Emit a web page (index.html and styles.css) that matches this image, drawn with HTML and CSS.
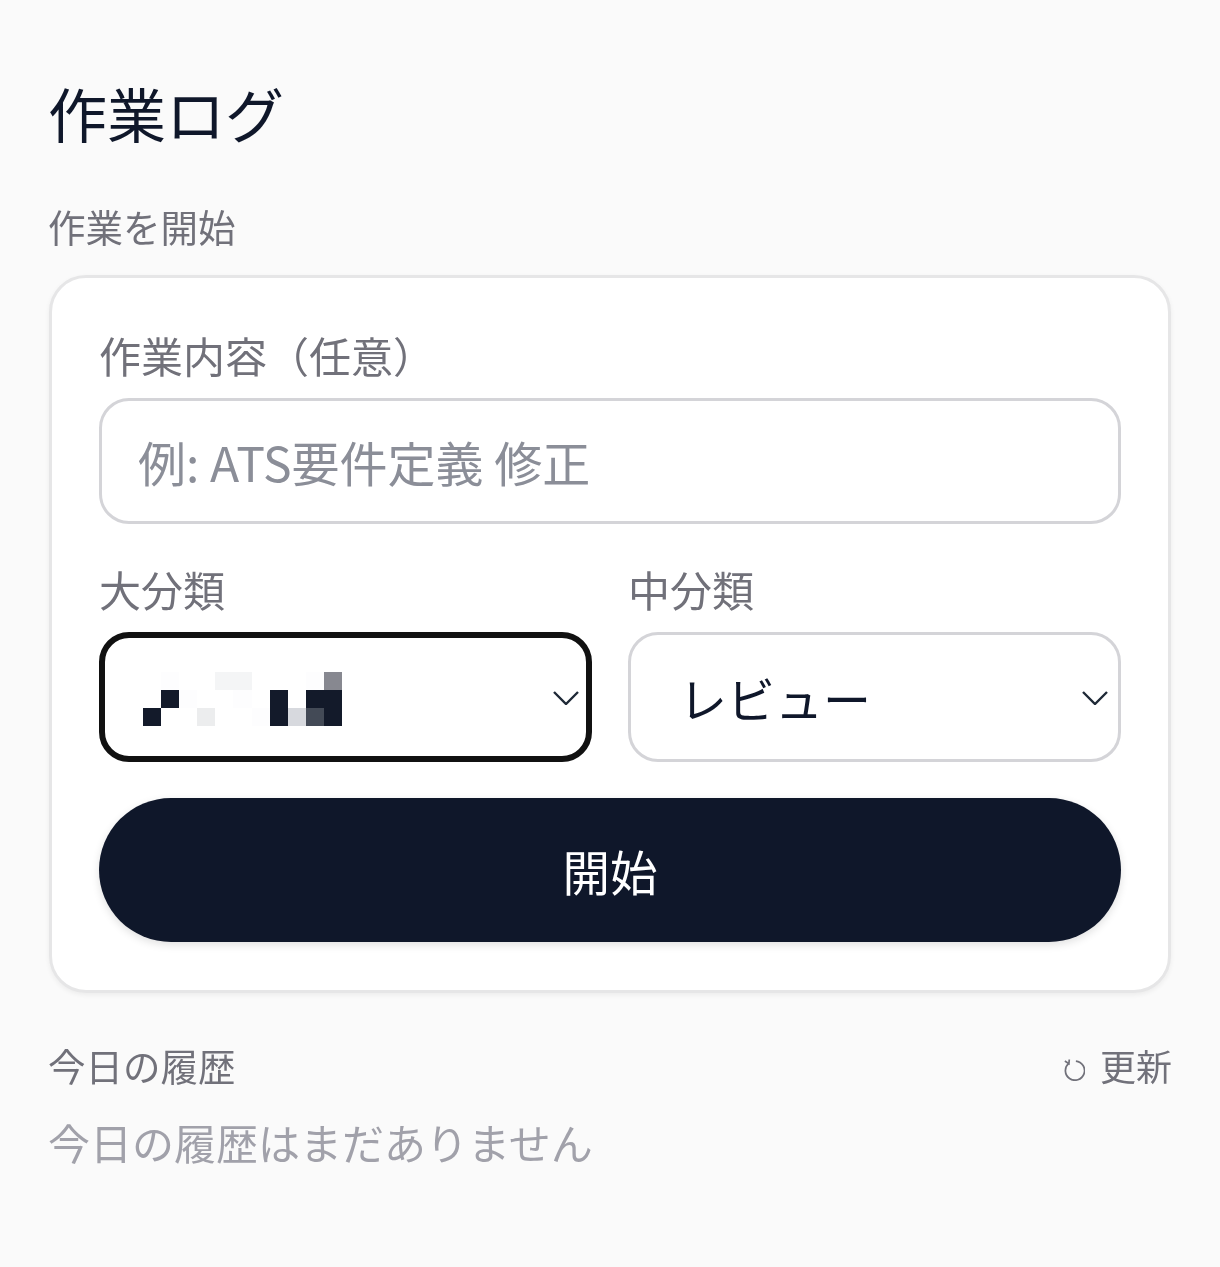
FILE: index.html
```html
<!DOCTYPE html>
<html lang="ja">
<head>
  <meta charset="UTF-8">
  <meta name="viewport" content="width=device-width, initial-scale=1.0">
  <title>作業ログ</title>
  <link rel="stylesheet" href="styles.css">
</head>
<body>
  <main class="page">
    <h1 class="title">作業ログ</h1>
    <h2 class="section-label">作業を開始</h2>

    <form class="card">
      <label class="field-label" for="task">作業内容（任意）</label>
      <input class="text-input" type="text" id="task" placeholder="例: ATS要件定義 修正">

      <div class="select-row">
        <div class="select-col">
          <div class="field-label">大分類</div>
          <div class="select select-focus">
            <div class="mosaic">
              <i></i><i class="c-faint"></i><i></i><i></i><i class="c-pale"></i><i class="c-pale"></i><i></i><i></i><i></i><i class="c-faint"></i><i class="c-mid"></i>
              <i></i><i class="c-dark"></i><i class="c-faint"></i><i></i><i></i><i class="c-faint"></i><i></i><i class="c-dark"></i><i></i><i class="c-dark"></i><i class="c-dark"></i>
              <i class="c-dark"></i><i></i><i></i><i class="c-light"></i><i></i><i></i><i class="c-faint"></i><i class="c-dark"></i><i class="c-grey"></i><i class="c-slate"></i><i class="c-dark"></i>
            </div>
            <svg class="chevron" viewBox="0 0 26 14"><path d="M1 1l12 12L25 1"/></svg>
          </div>
        </div>
        <div class="select-col">
          <div class="field-label">中分類</div>
          <div class="select">
            <span class="select-value">レビュー</span>
            <svg class="chevron" viewBox="0 0 26 14"><path d="M1 1l12 12L25 1"/></svg>
          </div>
        </div>
      </div>

      <button class="start-btn" type="button">開始</button>
    </form>

    <div class="history-head">
      <h2 class="section-label">今日の履歴</h2>
      <button class="refresh" type="button">
        <svg class="refresh-icon" viewBox="0 0 24 24"><path d="M7 5.6A10 10 0 1 0 14.5 3.2"/><path d="M3 3.2L7.2 6l.4-4.4"/></svg>
        更新
      </button>
    </div>
    <p class="empty">今日の履歴はまだありません</p>
  </main>
</body>
</html>
```
FILE: styles.css
```css
* {
  margin: 0;
  padding: 0;
  box-sizing: border-box;
}

body {
  background: #fafafa;
  color: #0f172a;
  font-family: "Noto Sans CJK JP", "Noto Sans", sans-serif;
}

.page {
  padding: 75px 48px 0;
  will-change: opacity;
}

.title {
  font-size: 59px;
  font-weight: 400;
  line-height: 76px;
}

.section-label {
  font-size: 37.5px;
  font-weight: 400;
  line-height: 50px;
  color: #71717a;
}

.page > .section-label {
  margin-top: 50px;
}

.card {
  margin: 24px 1px 0;
  height: 718px;
  padding: 47px 47px;
  background: #fff;
  border: 3px solid #e6e6e7;
  border-radius: 37px;
  box-shadow: 0 2px 5px rgba(0, 0, 0, 0.06);
}

.field-label {
  display: block;
  font-size: 42px;
  line-height: 60px;
  color: #71717a;
}

.text-input {
  display: block;
  width: 100%;
  height: 126px;
  margin-top: 13px;
  padding: 0 36px;
  font-family: inherit;
  font-size: 48px;
  color: #0f172a;
  background: #fff;
  border: 3.5px solid #d4d4d8;
  border-radius: 30px;
  outline: none;
}

.text-input::placeholder {
  color: #8b8e98;
  opacity: 1;
}

.select-row {
  display: grid;
  grid-template-columns: 1fr 1fr;
  gap: 36px;
  margin-top: 35px;
}

.select {
  display: flex;
  align-items: center;
  justify-content: space-between;
  height: 130px;
  margin-top: 13px;
  padding: 0 10px 0 48px;
  background: #fff;
  border: 3.5px solid #d4d4d8;
  border-radius: 30px;
}

.select-focus {
  padding: 0 7px 0 38px;
  border: 6px solid #111;
}

.select-value {
  font-size: 48px;
  line-height: 60px;
}

.chevron {
  width: 26px;
  height: 14px;
  margin-top: 2px;
  fill: none;
  stroke: #1f2937;
  stroke-width: 2.4;
}

.mosaic {
  display: grid;
  grid-template-columns: repeat(11, 18.1px);
  grid-auto-rows: 17.7px;
  margin-top: 4px;
}

.c-faint { background: #fdfdfe; }
.c-pale { background: #f4f5f6; }
.c-light { background: #ecedee; }
.c-grey { background: #d7d9de; }
.c-mid { background: #878890; }
.c-slate { background: #434a56; }
.c-dark { background: #131a2a; }

.start-btn {
  display: block;
  width: 100%;
  height: 144px;
  margin-top: 36px;
  font-family: inherit;
  font-size: 47.5px;
  color: #fff;
  background: #0f172a;
  border: none;
  border-radius: 72px;
  box-shadow: 0 3px 8px rgba(0, 0, 0, 0.12);
}

.history-head {
  display: flex;
  align-items: center;
  justify-content: space-between;
  margin-top: 47px;
}

.refresh {
  display: flex;
  align-items: center;
  gap: 15px;
  font-family: inherit;
  font-size: 36px;
  line-height: 50px;
  color: #71717a;
  background: none;
  border: none;
}

.refresh-icon {
  width: 23px;
  height: 23px;
  margin-top: 8px;
  fill: none;
  stroke: #71717a;
  stroke-width: 1.8;
}

.empty {
  margin-top: 22px;
  font-size: 42px;
  line-height: 60px;
  color: #a1a1aa;
}
```
